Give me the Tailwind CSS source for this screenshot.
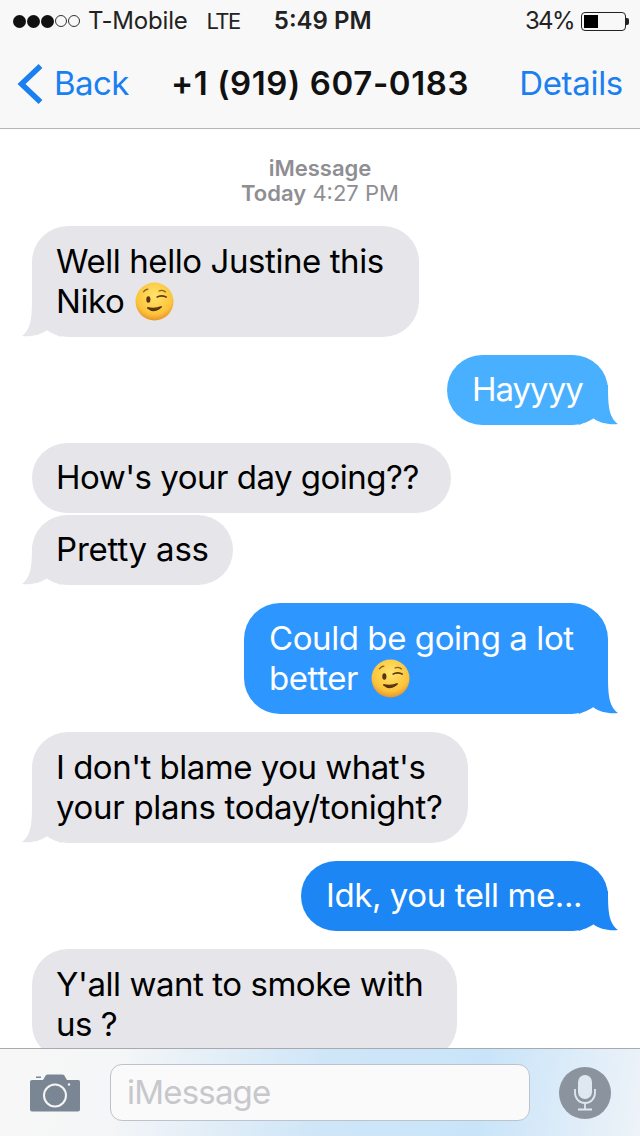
<!DOCTYPE html>
<html lang="en">
<head>
    <meta charset="UTF-8">
    <title>Messages</title>
    <script src="https://cdn.jsdelivr.net/npm/@tailwindcss/browser@4"></script>
</head>
<body class="bg-white">
<div class="w-[640px] h-[1136px] overflow-hidden relative flex flex-col font-['Inter','Liberation_Sans',sans-serif]">
    <!-- Header -->
    <header class="h-[129px] shrink-0 bg-[#f8f8f8] border-b border-[#b5b5b5] flex flex-col">
        <div class="h-[42px] flex items-center text-[24px] text-[#222]">
            <div class="flex items-center gap-[1px] ml-[13px]">
                <span class="w-[13px] h-[13px] rounded-full bg-[#111]"></span>
                <span class="w-[13px] h-[13px] rounded-full bg-[#111]"></span>
                <span class="w-[13px] h-[13px] rounded-full bg-[#111]"></span>
                <span class="w-[12px] h-[12px] rounded-full border border-[#333]"></span>
                <span class="w-[12px] h-[12px] rounded-full border border-[#333]"></span>
            </div>
            <span class="ml-[8px] tracking-[-0.2px]">T-Mobile</span>
            <span class="ml-[19px] text-[22px] tracking-[-1.5px]">LTE</span>
            <span class="ml-[34px] font-semibold">5:49 PM</span>
            <span class="ml-auto tracking-[-1.6px]">34%</span>
            <div class="ml-[7px] mr-[11px] flex items-center">
                <div class="w-[45px] h-[19px] border border-[#222] rounded-[4px] p-[2px]">
                    <div class="w-[14px] h-full bg-black"></div>
                </div>
                <div class="w-[3px] h-[7px] bg-[#222] rounded-r-[2px]"></div>
            </div>
        </div>
        <div class="flex-1 grid grid-cols-[1fr_auto_1fr] items-center pb-[3px] text-[33px]">
            <a class="flex items-center text-[#1a7ff0] ml-[17px]">
                <svg width="26" height="42" viewBox="0 0 26 42" fill="none"><path d="M23.5 3 L4.500 21 L23.500 39" stroke="#1a7ff0" stroke-width="5.5"/></svg>
                <span class="ml-[11px] tracking-[-0.6px]">Back</span>
            </a>
            <span class="font-semibold text-[#111] tracking-[0.6px]">+1 (919) 607-0183</span>
            <a class="justify-self-end text-[#1a7ff0] mr-[17px] tracking-[-0.3px]">Details</a>
        </div>
    </header>

    <!-- Conversation -->
    <main class="flex-1 min-h-0 overflow-hidden flex flex-col">
        <div class="text-center text-[#8e8e93] text-[22px] leading-[25px] pt-[27px] pb-[20px]">
            <p class="font-semibold">iMessage</p>
            <p><span class="font-semibold">Today</span> 4:27 PM</p>
        </div>

        <div class="relative self-start ml-[32px] w-[387px] h-[111px] shrink-0 bg-[#e5e5ea] rounded-[36px] pl-[24px] pt-[15px] text-[33px] leading-[40px] text-black">
            <svg class="absolute left-[-11px] bottom-0" width="40" height="40" viewBox="0 0 40 40"><path d="M11 0 C11 22 10 32 1 39 C10 40 20 38 26 33 L40 40 L40 0 Z" fill="#e5e5ea"/></svg>
            <p class="relative tracking-[-0.42px]">Well hello Justine this</p>
            <p class="relative flex items-center tracking-[-0.42px]">Niko
                <svg class="ml-[11px]" width="39" height="39" viewBox="0 0 38 38"><defs><radialGradient id="f1" cx="50%" cy="35%" r="65%"><stop offset="0%" stop-color="#ffe46b"/><stop offset="75%" stop-color="#fcc33a"/><stop offset="100%" stop-color="#e8932a"/></radialGradient></defs><circle cx="19" cy="19" r="18.5" fill="url(#f1)"/><ellipse cx="13" cy="17" rx="2" ry="3.2" fill="#5a3410"/><path d="M21 15 Q26 12 31 15" stroke="#5a3410" stroke-width="1.6" fill="none"/><path d="M8 10 Q10 7 13 7" stroke="#8a5a18" stroke-width="1.2" fill="none"/><path d="M23 9 Q27 7 30 10" stroke="#8a5a18" stroke-width="1.2" fill="none"/><path d="M12 25 Q19 31 26 24 Q19 27 12 25 Z" fill="#5a3410" stroke="#5a3410" stroke-width="1.2"/></svg>
            </p>
        </div>

        <div class="relative self-end mr-[32px] mt-[18px] w-[161px] h-[70px] shrink-0 bg-[#49b0ff] rounded-[36px] pl-[25px] pt-[14px] text-[33px] leading-[40px] text-white">
            <svg class="absolute right-[-11px] bottom-0" width="40" height="40" viewBox="0 0 40 40"><path d="M29 0 C29 22 30 32 39 39 C30 40 20 38 14 33 L0 40 L0 0 Z" fill="#49b0ff"/></svg>
            <p class="relative tracking-[-1px]">Hayyyy</p>
        </div>

        <div class="relative self-start ml-[32px] mt-[18px] w-[419px] h-[70px] shrink-0 bg-[#e5e5ea] rounded-[36px] pl-[24px] pt-[14px] text-[33px] leading-[40px] text-black">
            <p class="relative tracking-[-0.5px]">How's your day going??</p>
        </div>

        <div class="relative self-start ml-[32px] mt-[2px] w-[201px] h-[70px] shrink-0 bg-[#e5e5ea] rounded-[36px] pl-[24px] pt-[14px] text-[33px] leading-[40px] text-black">
            <svg class="absolute left-[-11px] bottom-0" width="40" height="40" viewBox="0 0 40 40"><path d="M11 0 C11 22 10 32 1 39 C10 40 20 38 26 33 L40 40 L40 0 Z" fill="#e5e5ea"/></svg>
            <p class="relative tracking-[-0.2px]">Pretty ass</p>
        </div>

        <div class="relative self-end mr-[32px] mt-[18px] w-[364px] h-[111px] shrink-0 bg-[#2e97ff] rounded-[36px] pl-[25px] pt-[15px] text-[33px] leading-[40px] text-white">
            <svg class="absolute right-[-11px] bottom-0" width="40" height="40" viewBox="0 0 40 40"><path d="M29 0 C29 22 30 32 39 39 C30 40 20 38 14 33 L0 40 L0 0 Z" fill="#2e97ff"/></svg>
            <p class="relative tracking-[-0.42px]">Could be going a lot</p>
            <p class="relative flex items-center tracking-[-0.42px]">better
                <svg class="ml-[13px]" width="39" height="39" viewBox="0 0 38 38"><defs><radialGradient id="f2" cx="50%" cy="35%" r="65%"><stop offset="0%" stop-color="#ffe46b"/><stop offset="75%" stop-color="#fcc33a"/><stop offset="100%" stop-color="#e8932a"/></radialGradient></defs><circle cx="19" cy="19" r="18.5" fill="url(#f2)"/><ellipse cx="13" cy="17" rx="2" ry="3.2" fill="#5a3410"/><path d="M21 15 Q26 12 31 15" stroke="#5a3410" stroke-width="1.6" fill="none"/><path d="M8 10 Q10 7 13 7" stroke="#8a5a18" stroke-width="1.2" fill="none"/><path d="M23 9 Q27 7 30 10" stroke="#8a5a18" stroke-width="1.2" fill="none"/><path d="M12 25 Q19 31 26 24 Q19 27 12 25 Z" fill="#5a3410" stroke="#5a3410" stroke-width="1.2"/></svg>
            </p>
        </div>

        <div class="relative self-start ml-[32px] mt-[18px] w-[436px] h-[111px] shrink-0 bg-[#e5e5ea] rounded-[36px] pl-[24px] pt-[15px] text-[33px] leading-[40px] text-black">
            <svg class="absolute left-[-11px] bottom-0" width="40" height="40" viewBox="0 0 40 40"><path d="M11 0 C11 22 10 32 1 39 C10 40 20 38 26 33 L40 40 L40 0 Z" fill="#e5e5ea"/></svg>
            <p class="relative tracking-[-0.5px]">I don't blame you what's</p>
            <p class="relative tracking-[-0.3px]">your plans today/tonight?</p>
        </div>

        <div class="relative self-end mr-[32px] mt-[18px] w-[307px] h-[70px] shrink-0 bg-[#1c86f5] rounded-[36px] pl-[25px] pt-[14px] text-[33px] leading-[40px] text-white">
            <svg class="absolute right-[-11px] bottom-0" width="40" height="40" viewBox="0 0 40 40"><path d="M29 0 C29 22 30 32 39 39 C30 40 20 38 14 33 L0 40 L0 0 Z" fill="#1c86f5"/></svg>
            <p class="relative tracking-[-0.42px]">Idk, you tell me...</p>
        </div>

        <div class="relative self-start ml-[32px] mt-[18px] w-[425px] h-[111px] shrink-0 bg-[#e5e5ea] rounded-[36px] pl-[24px] pt-[15px] text-[33px] leading-[40px] text-black">
            <p class="relative tracking-[-0.45px]">Y'all want to smoke with</p>
            <p class="relative tracking-[-0.45px]">us ?</p>
        </div>
    </main>

    <!-- Input bar -->
    <footer class="h-[88px] shrink-0 relative z-10 border-t border-[#a9a9ae] bg-[linear-gradient(100deg,#f7f7f7_0%,#f5f6f7_18%,#cfe6f8_50%,#c9e4f9_75%,#eef3f8_100%)] flex items-center">
        <svg class="ml-[30px] mt-[1px]" width="50" height="38" viewBox="0 0 50 38">
            <path d="M2 6 H13 L16 1 Q16.500 0.500 18 0.500 H32 Q33.500 0.500 34 1 L37 6 H48.500 Q50 6 50 8 V35.500 Q50 37.500 48 37.500 H2 Q0 37.500 0 35.500 V8 Q0 6 2 6 Z" fill="#7b8694"/>
            <circle cx="25" cy="21.500" r="11" fill="none" stroke="#f6f6f6" stroke-width="2"/>
            <rect x="6" y="2.500" width="5" height="1.500" fill="#7b8694"/>
            <circle cx="39" cy="10.500" r="1.200" fill="#f6f6f6"/>
        </svg>
        <div class="ml-[30px] w-[420px] h-[57px] bg-[#fafafa] border border-[#bcc3cc] rounded-[12px] flex items-center pl-[16px] text-[33px] tracking-[-0.8px] text-[#c7c7cc]">iMessage</div>
        <div class="ml-[29px] w-[52px] h-[52px] rounded-full bg-[#8a939e] flex items-center justify-center">
            <svg width="24" height="38" viewBox="0 0 24 38" fill="none">
                <rect x="5" y="1" width="14" height="24" rx="7" fill="#dfe8f0"/>
                <path d="M2 15 V19 A10 10 0 0 0 22 19 V15 M12 29 V35 M5 35.500 H19" stroke="#dfe8f0" stroke-width="1.800"/>
            </svg>
        </div>
    </footer>
</div>
</body>
</html>
